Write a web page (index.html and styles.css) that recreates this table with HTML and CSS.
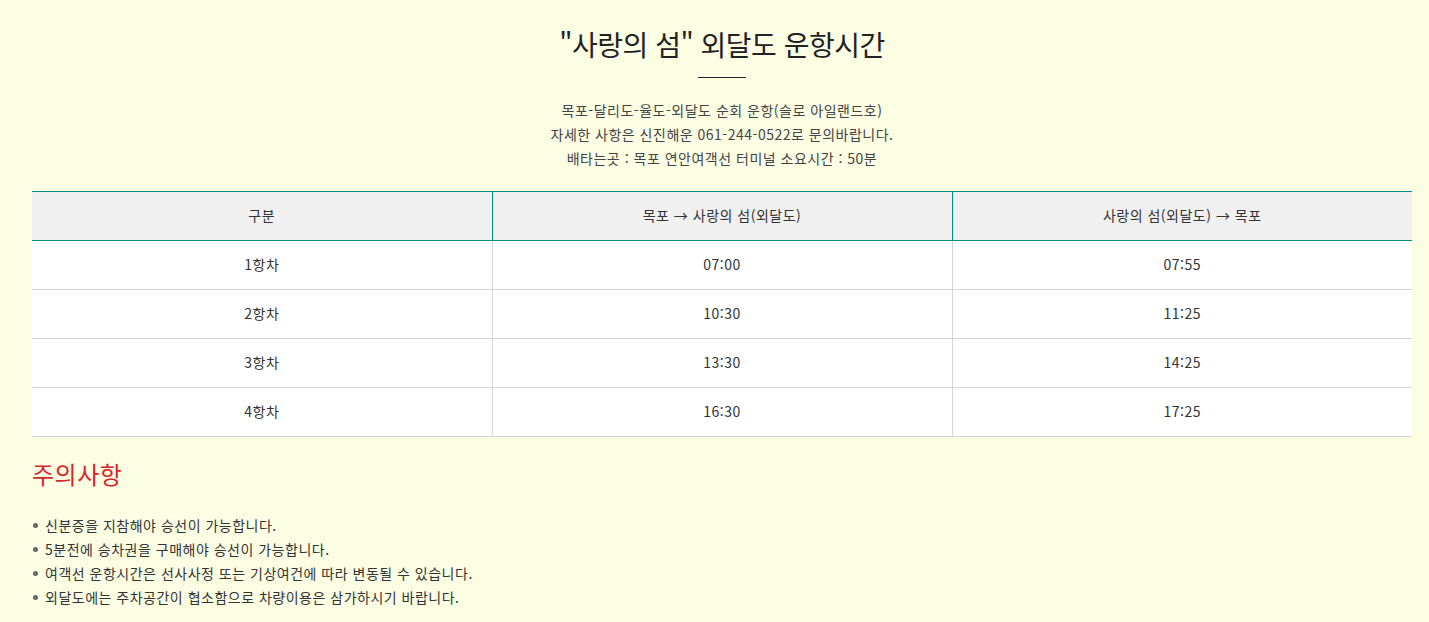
FILE: index.html
```html
<!DOCTYPE html>
<html lang="ko">
<head>
<meta charset="utf-8">
<title>사랑의 섬 외달도 운항시간</title>
<link rel="stylesheet" href="styles.css">
</head>
<body>
<div class="page">
  <h1 class="title">"사랑의 섬" 외달도 운항시간</h1>
  <div class="title-line"></div>
  <div class="desc">
    <p>목포-달리도-율도-외달도 순회 운항(슬로 아일랜드호)</p>
    <p>자세한 사항은 신진해운 061-244-0522로 문의바랍니다.</p>
    <p>배타는곳 : 목포 연안여객선 터미널 소요시간 : 50분</p>
  </div>
  <table class="schedule">
    <thead>
      <tr><th>구분</th><th>목포 → 사랑의 섬(외달도)</th><th>사랑의 섬(외달도) → 목포</th></tr>
    </thead>
    <tbody>
      <tr><td>1항차</td><td>07:00</td><td>07:55</td></tr>
      <tr><td>2항차</td><td>10:30</td><td>11:25</td></tr>
      <tr><td>3항차</td><td>13:30</td><td>14:25</td></tr>
      <tr><td>4항차</td><td>16:30</td><td>17:25</td></tr>
    </tbody>
  </table>
  <h2 class="notice-title">주의사항</h2>
  <ul class="notice">
    <li>신분증을 지참해야 승선이 가능합니다.</li>
    <li>5분전에 승차권을 구매해야 승선이 가능합니다.</li>
    <li>여객선 운항시간은 선사사정 또는 기상여건에 따라 변동될 수 있습니다.</li>
    <li>외달도에는 주차공간이 협소함으로 차량이용은 삼가하시기 바랍니다.</li>
  </ul>
</div>
</body>
</html>
```
FILE: styles.css
```css
html, body {
  margin: 0;
  padding: 0;
  background: #fbfee3;
}
body {
  font-family: "Noto Sans CJK KR", "Noto Sans", sans-serif;
  color: #333;
  font-size: 14px;
  letter-spacing: 0.5px;
}
.page {
  width: 1380px;
  margin-left: 32px;
  padding-top: 23px;
}
.title {
  margin: 0;
  font-size: 28px;
  font-weight: 400;
  line-height: 42px;
  text-align: center;
  color: #222;
  letter-spacing: -0.5px;
}
.title-line {
  width: 48px;
  height: 1px;
  background: #222;
  margin: 12px auto 0;
}
.desc {
  margin-top: 20px;
  text-align: center;
  color: #444;
}
.desc p {
  margin: 0;
  line-height: 24px;
}
.schedule {
  width: 100%;
  margin-top: 21px;
  border-collapse: collapse;
  table-layout: fixed;
  background: #fff;
}
.schedule th {
  background: #f0f0f0;
  font-weight: 400;
  height: 46px;
  padding: 0 0 2px;
  border-top: 1px solid #00927f;
  border-bottom: 1px solid #00927f;
  border-left: 1px solid #00927f;
  color: #333;
}
.schedule th:first-child { border-left: none; }
.schedule td {
  height: 46px;
  padding: 0 0 2px;
  text-align: center;
  border-bottom: 1px solid #d5d5d5;
  border-left: 1px solid #d5d5d5;
}
.schedule td:first-child { border-left: none; }
.notice-title {
  margin: 20px 0 0;
  font-size: 24px;
  font-weight: 400;
  line-height: 34px;
  color: #d7262b;
}
.notice {
  list-style: none;
  margin: 22px 0 0;
  padding: 0;
  color: #333;
}
.notice li {
  position: relative;
  line-height: 24px;
  padding-left: 13px;
}
.notice li::before {
  content: "";
  position: absolute;
  left: 1px;
  top: 10px;
  width: 5px;
  height: 5px;
  border-radius: 50%;
  background: #666;
}
```
